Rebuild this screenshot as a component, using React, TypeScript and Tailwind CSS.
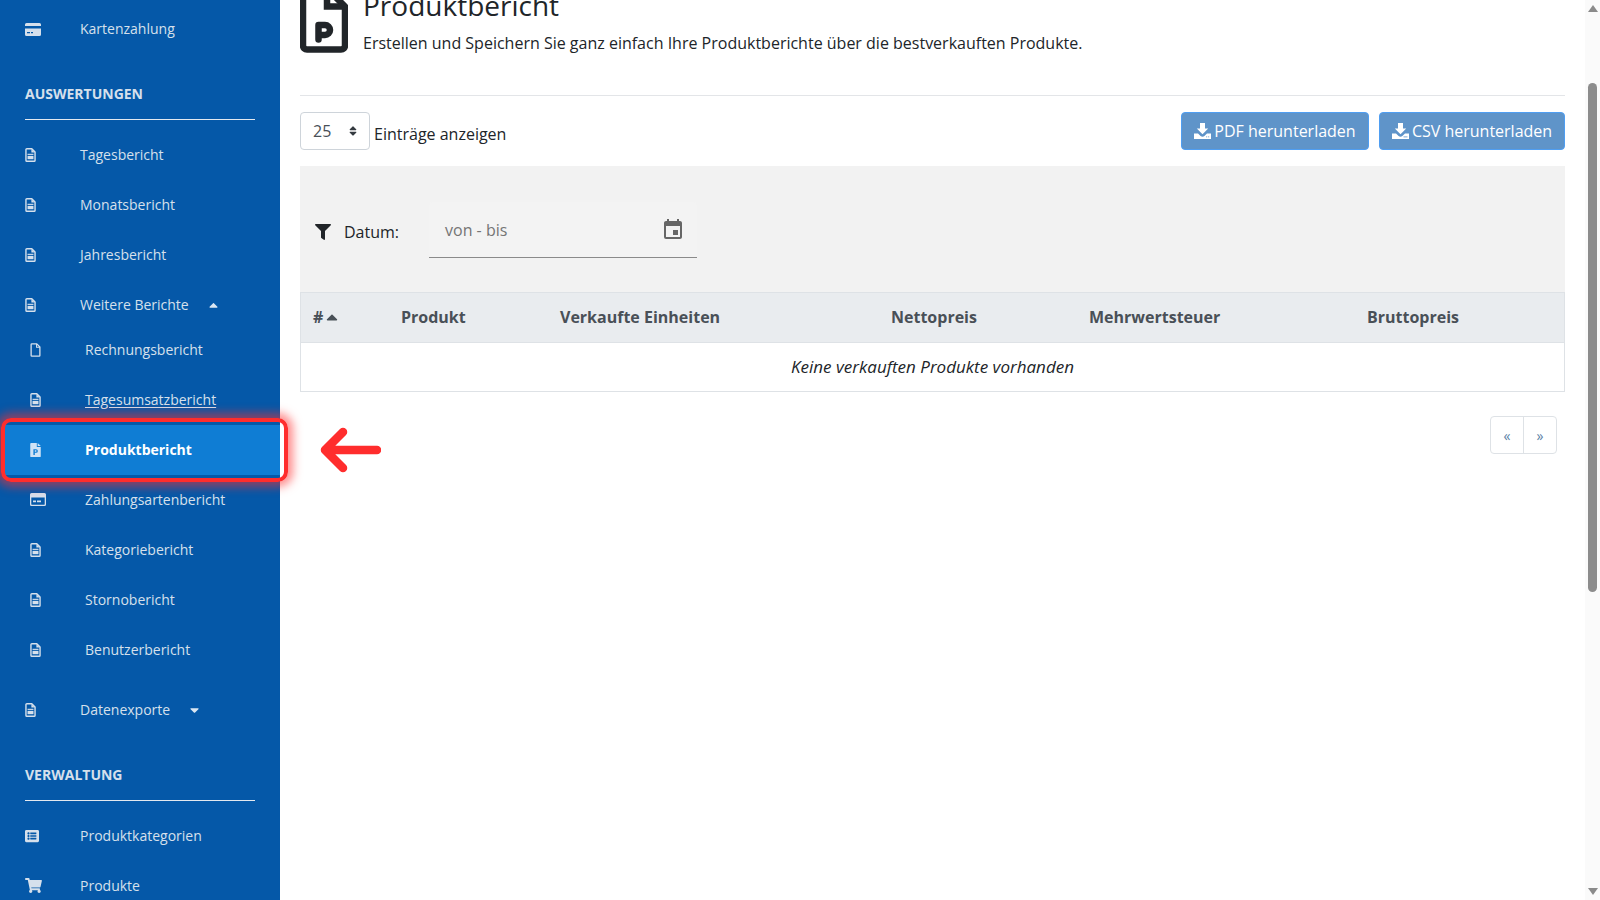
import { FaShoppingCart, FaListAlt, FaFilter, FaCaretUp, FaCaretDown, FaSort } from 'react-icons/fa';
import { MdEvent } from 'react-icons/md';

type IconProps = { className?: string };

// file outline with a small solid block inside, used for most report links
function ReportIcon({ className = '' }: IconProps) {
  return (
    <svg viewBox="0 0 12 16" className={className} fill="none">
      <path d="M1.8 .8h5.7l3.7 3.7v9.7a1 1 0 0 1-1 1H1.8a1 1 0 0 1-1-1V1.8a1 1 0 0 1 1-1Z" stroke="currentColor" strokeWidth="1.6" strokeLinejoin="round" />
      <path d="M7 1v4h4Z" fill="currentColor" />
      <rect x="2.6" y="6.6" width="6.8" height="1.3" fill="currentColor" />
      <rect x="2.6" y="9" width="6.8" height="3.8" fill="currentColor" />
    </svg>
  );
}

function BlankFileIcon({ className = '' }: IconProps) {
  return (
    <svg viewBox="0 0 12 16" className={className} fill="none">
      <path d="M1.8 1h5.7L11 4.5v9.7a.8.8 0 0 1-.8.8H1.8a.8.8 0 0 1-.8-.8V1.8A.8.8 0 0 1 1.8 1Z" stroke="currentColor" strokeWidth="1.5" strokeLinejoin="round" />
      <path d="M7.2 1v3.8H11" stroke="currentColor" strokeWidth="1.2" />
    </svg>
  );
}

function ProductFileIcon({ className = '' }: IconProps) {
  return (
    <svg viewBox="0 0 12 16" className={className}>
      <path d="M1 0h6.5v4.5H12V15a1 1 0 0 1-1 1H1a1 1 0 0 1-1-1V1a1 1 0 0 1 1-1Z" fill="currentColor" />
      <path d="M8.5 0 12 3.5H8.5Z" fill="currentColor" />
      <path d="M3.6 13.6V7h3a2.1 2.1 0 0 1 0 4.2H5.2v2.4Zm1.6-3.7h1.2a.8.8 0 0 0 0-1.6H5.2Z" fill="#0f7dd4" />
    </svg>
  );
}

function CardIcon({ className = '' }: IconProps) {
  return (
    <svg viewBox="0 0 16 13" className={className}>
      <path d="M1.5 0h13A1.5 1.5 0 0 1 16 1.5V3H0V1.5A1.5 1.5 0 0 1 1.5 0Z" fill="currentColor" />
      <path d="M0 5.5h16v6a1.5 1.5 0 0 1-1.5 1.5h-13A1.5 1.5 0 0 1 0 11.5Zm2 3.5v1.3h3V9Zm4 0v1.3h2V9Z" fill="currentColor" fillRule="evenodd" />
    </svg>
  );
}

function CardOutlineIcon({ className = '' }: IconProps) {
  return (
    <svg viewBox="0 0 16 13" className={className}>
      <path d="M1.5 0h13A1.5 1.5 0 0 1 16 1.5v10a1.5 1.5 0 0 1-1.5 1.5h-13A1.5 1.5 0 0 1 0 11.5v-10A1.5 1.5 0 0 1 1.5 0ZM1.3 4.6v6.6c0 .3.2.5.5.5h12.4c.3 0 .5-.2.5-.5V4.6Zm1.7 3h3v1.6H3Zm4 0h4v1.6H7Z" fill="currentColor" fillRule="evenodd" />
    </svg>
  );
}

function PageIcon({ className = '' }: IconProps) {
  return (
    <svg viewBox="0 0 48 64" className={className} fill="none">
      <path d="M6 3h24l15 15v39a4 4 0 0 1-4 4H7a4 4 0 0 1-4-4V6a3 3 0 0 1 3-3Z" stroke="currentColor" strokeWidth="6.5" strokeLinejoin="round" />
      <path d="M27 2v16h19" stroke="currentColor" strokeWidth="6.5" />
      <path d="M18.5 51V36.5H25a5 5 0 0 1 0 10h-6.5" stroke="currentColor" strokeWidth="6.5" strokeLinecap="round" strokeLinejoin="round" />
    </svg>
  );
}

function DownloadIcon({ doc }: { doc: 'pdf' | 'csv' }) {
  return (
    <svg viewBox="0 0 17 16" className="mr-[3px] h-[16px] w-[17px] shrink-0">
      <path d="M6 0h5v5.5h3.2L8.5 11.2 2.8 5.5H6Z" fill="currentColor" />
      <path d="M0 10.5h4l2.6 2.6c1 1 2.8 1 3.8 0l2.6-2.6h4V16H0Z" fill="currentColor" />
      {doc === 'pdf' ? (
        <path d="M12 13.4h1.2v.9H12Zm2 0h1.2v.9H14Z" fill="#5f94c9" />
      ) : (
        <path d="M11.5 13.5h4v.8h-4Z" fill="#5f94c9" />
      )}
    </svg>
  );
}

function NavRow({ icon, label, nested, caret, className = '' }: { icon: React.ReactNode; label: string; nested?: boolean; caret?: 'up' | 'down'; className?: string }) {
  return (
    <div className={`flex h-[50px] items-center ${nested ? 'pl-[30px]' : 'pl-[25px]'} ${className}`}>
      <span className="flex w-[55px] shrink-0 items-center">{icon}</span>
      <span className="-mt-[2px]">{label}</span>
      {caret === 'up' && <FaCaretUp className="ml-[19px] h-[14px] w-[11px] text-white/85" />}
      {caret === 'down' && <FaCaretDown className="ml-[19px] h-[14px] w-[11px] text-white/85" />}
    </div>
  );
}

function SectionTitle({ children }: { children: string }) {
  return (
    <div className="mx-[25px] border-b border-[#e4e9f0] pb-[15px] font-bold leading-[20px]">{children}</div>
  );
}

const report = <ReportIcon className="h-[14px] w-[11px]" />;

export default function App() {
  return (
    <div className="flex h-screen overflow-hidden bg-white text-[#212529] [font-family:'Open_Sans',sans-serif]">
      <aside className="relative w-[280px] shrink-0 overflow-hidden bg-[#0558a8] pt-[4px] text-[14px] text-[#d6e0ec]">
        <NavRow label="Kartenzahlung" icon={<CardIcon className="h-[13px] w-[16px]" />} />
        <div className="mt-[30px]">
          <SectionTitle>AUSWERTUNGEN</SectionTitle>
        </div>
        <div className="mt-[10px]">
          <NavRow label="Tagesbericht" icon={report} />
          <NavRow label="Monatsbericht" icon={report} />
          <NavRow label="Jahresbericht" icon={report} />
          <NavRow label="Weitere Berichte" icon={report} caret="up" />
          <div className="-mt-[5px]">
            <NavRow nested label="Rechnungsbericht" icon={<BlankFileIcon className="h-[14px] w-[11px]" />} />
            <div className="flex h-[50px] items-center pl-[30px]">
              <span className="flex w-[55px] shrink-0 items-center">{report}</span>
              <span className="-mt-[2px] underline underline-offset-2">Tagesumsatzbericht</span>
            </div>
            <div className="ml-[5px] flex h-[50px] items-center bg-[#0f7dd4] pl-[25px] font-bold text-white">
              <span className="flex w-[55px] shrink-0 items-center"><ProductFileIcon className="h-[14px] w-[11px] text-[#cfe2f5]" /></span>
              <span className="-mt-[2px]">Produktbericht</span>
            </div>
            <NavRow nested label="Zahlungsartenbericht" icon={<CardOutlineIcon className="-mt-[1px] h-[13px] w-[16px]" />} />
            <NavRow nested label="Kategoriebericht" icon={report} />
            <NavRow nested label="Stornobericht" icon={report} />
            <NavRow nested label="Benutzerbericht" icon={report} />
          </div>
          <NavRow className="mt-[10px]" label="Datenexporte" icon={report} caret="down" />
        </div>
        <div className="mt-[30px]">
          <SectionTitle>VERWALTUNG</SectionTitle>
        </div>
        <div className="mt-[10px]">
          <NavRow label="Produktkategorien" icon={<FaListAlt className="h-[14px] w-[14px]" />} />
          <NavRow label="Produkte" icon={<FaShoppingCart className="-mt-[1px] h-[15px] w-[17px]" />} />
        </div>
      </aside>

      <main className="min-w-0 flex-1 px-[20px]">
        <header className="-mt-[14px] flex h-[110px] items-start border-b border-[#e3e5e8]">
          <PageIcon className="mt-[2px] h-[65px] w-[48px] shrink-0 text-[#212529]" />
          <div className="ml-[15px]">
            <h1 className="text-[28px] leading-[38px]">Produktbericht</h1>
            <p className="mt-[8px] text-[16px] leading-[22px]">Erstellen und Speichern Sie ganz einfach Ihre Produktberichte über die bestverkauften Produkte.</p>
          </div>
        </header>

        <div className="mt-[16px] flex items-center justify-between">
          <div className="flex items-center">
            <div className="flex h-[38px] w-[70px] items-center justify-between rounded border border-[#ced4da] pl-[12px] pr-[12px] text-[16px] text-[#495057]">
              <span>25</span>
              <FaSort className="h-[12px] w-[8px] text-[#343a40]" />
            </div>
            <span className="ml-[4px] mt-[5px] text-[16px]">Einträge anzeigen</span>
          </div>
          <div className="flex gap-[10px] text-[16px] text-white">
            <button className="flex h-[38px] w-[188px] items-center justify-center rounded border border-[#4f9ef2] bg-[#5f94c9]">
              <DownloadIcon doc="pdf" />PDF herunterladen
            </button>
            <button className="flex h-[38px] w-[186px] items-center justify-center rounded border border-[#4f9ef2] bg-[#5f94c9]">
              <DownloadIcon doc="csv" />CSV herunterladen
            </button>
          </div>
        </div>

        <div className="mt-[16px] flex h-[126px] items-center bg-[#f2f2f2] pl-[15px] pt-[1px]">
          <FaFilter className="mt-[4px] h-[16px] w-[16px] text-[#212529]" />
          <span className="ml-[13px] mt-[5px] text-[16px]">Datum:</span>
          <div className="ml-[30px] flex h-[56px] w-[268px] items-center justify-between rounded-t border-b border-[#8a8a8a] bg-[#f3f3f3] pl-[16px] pr-[12px] pt-[2px]">
            <span className="text-[16px] text-[#757575]">von - bis</span>
            <MdEvent className="h-[24px] w-[24px] text-[#666666]" />
          </div>
        </div>

        <div className="border border-t-0 border-[#dee2e6]">
          <div className="grid h-[51px] grid-cols-[100px_159px_331px_198px_278px_1fr] items-center border-y border-[#dee2e6] bg-[#e9ecef] pb-[2px] text-[16px] font-bold text-[#495057]">
            <span className="flex items-center pl-[12px]">#<FaCaretUp className="ml-[2px] h-[18px] w-[14px]" /></span>
            <span>Produkt</span>
            <span>Verkaufte Einheiten</span>
            <span>Nettopreis</span>
            <span>Mehrwertsteuer</span>
            <span>Bruttopreis</span>
          </div>
          <div className="flex h-[48px] items-center justify-center text-[17px] italic">Keine verkauften Produkte vorhanden</div>
        </div>

        <div className="mr-[8px] mt-[24px] flex justify-end">
          <div className="flex h-[38px] w-[67px] rounded border border-[#dee2e6] text-[14px] text-[#5b7fa6]">
            <span className="flex flex-1 items-center justify-center border-r border-[#dee2e6]">«</span>
            <span className="flex flex-1 items-center justify-center">»</span>
          </div>
        </div>
      </main>

      {/* scrollbar of the window */}
      <div className="relative flex w-[15px] shrink-0 flex-col items-center bg-[#fafafa]">
        <div className="mt-[5px] h-0 w-0 border-x-[5px] border-b-[7px] border-x-transparent border-b-[#8a8a8a]" />
        <div className="mt-[71px] h-[509px] w-[9px] rounded-full bg-[#8c8c8c]" />
        <div className="mt-auto mb-[5px] h-0 w-0 border-x-[5px] border-t-[7px] border-x-transparent border-t-[#8a8a8a]" />
      </div>

      {/* red marker drawn over the screenshot */}
      <div className="absolute left-[1px] top-[418px] h-[64px] w-[287px] rounded-[10px] border-[4px] border-[#ff2d2d] shadow-[0_0_10px_5px_rgba(255,45,45,0.55)]" />
      <svg viewBox="0 0 62 46" className="absolute left-[319px] top-[427px] h-[46px] w-[62px]" fill="none">
        <path d="M58 23H7M24 5 6 23l18 18" stroke="#ff2d2d" strokeWidth="8.5" strokeLinecap="round" strokeLinejoin="round" />
      </svg>
    </div>
  );
}
